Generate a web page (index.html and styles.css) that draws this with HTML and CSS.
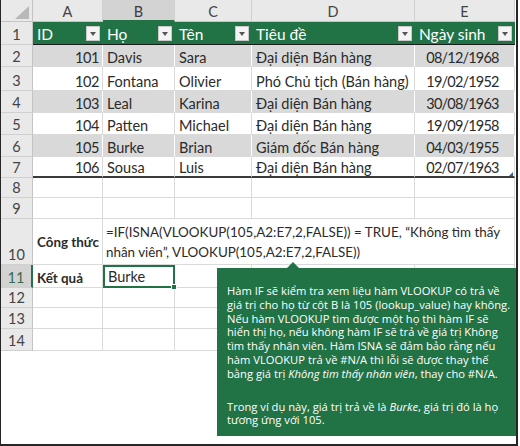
FILE: index.html
```html
<!DOCTYPE html>
<html lang="vi">
<head>
<meta charset="utf-8">
<link rel="stylesheet" href="styles.css">
</head>
<body>
<div class="sheet">
  <div class="grid">
    <div class="corner"><span class="tri"></span></div>
    <div class="ch">A</div><div class="ch sel">B</div><div class="ch">C</div><div class="ch">D</div><div class="ch">E</div>

    <div class="rh">1</div>
    <div class="th">ID<span class="dd"></span></div>
    <div class="th">Họ<span class="dd"></span></div>
    <div class="th">Tên<span class="dd"></span></div>
    <div class="th">Tiêu đề<span class="dd"></span></div>
    <div class="th">Ngày sinh<span class="dd"></span></div>

    <div class="rh">2</div>
    <div class="c band num">101</div><div class="c band">Davis</div><div class="c band">Sara</div><div class="c band">Đại diện Bán hàng</div><div class="c band ctr">08/12/1968</div>
    <div class="rh">3</div>
    <div class="c num">102</div><div class="c">Fontana</div><div class="c">Olivier</div><div class="c">Phó Chủ tịch (Bán hàng)</div><div class="c ctr">19/02/1952</div>
    <div class="rh">4</div>
    <div class="c band num">103</div><div class="c band">Leal</div><div class="c band">Karina</div><div class="c band">Đại diện Bán hàng</div><div class="c band ctr">30/08/1963</div>
    <div class="rh">5</div>
    <div class="c num">104</div><div class="c">Patten</div><div class="c">Michael</div><div class="c">Đại diện Bán hàng</div><div class="c ctr">19/09/1958</div>
    <div class="rh">6</div>
    <div class="c band num">105</div><div class="c band">Burke</div><div class="c band">Brian</div><div class="c band">Giám đốc Bán hàng</div><div class="c band ctr">04/03/1955</div>
    <div class="rh">7</div>
    <div class="c last num">106</div><div class="c last">Sousa</div><div class="c last">Luis</div><div class="c last">Đại diện Bán hàng</div><div class="c last ctr">02/07/1963<span class="resize"></span></div>

    <div class="rh">8</div>
    <div class="c"></div><div class="c"></div><div class="c"></div><div class="c"></div><div class="c"></div>
    <div class="rh">9</div>
    <div class="c"></div><div class="c"></div><div class="c"></div><div class="c"></div><div class="c"></div>
    <div class="rh">10</div>
    <div class="c label mid">Công thức</div>
    <div class="c formula">=IF(ISNA(VLOOKUP(105,A2:E7,2,FALSE)) = TRUE, “Không tìm thấy<br>nhân viên”, VLOOKUP(105,A2:E7,2,FALSE))</div>
    <div class="rh selrow">11</div>
    <div class="c label">Kết quả</div>
    <div class="c active">Burke<span class="handle"></span></div><div class="c"></div><div class="c"></div><div class="c"></div>
    <div class="rh">12</div>
    <div class="c"></div><div class="c"></div><div class="c"></div><div class="c"></div><div class="c"></div>
    <div class="rh">13</div>
    <div class="c"></div><div class="c"></div><div class="c"></div><div class="c"></div><div class="c"></div>
    <div class="rh">14</div>
    <div class="c"></div><div class="c"></div><div class="c"></div><div class="c"></div><div class="c"></div>
  </div>

  <div class="tip">
    <p>Hàm IF sẽ kiểm tra xem liệu hàm VLOOKUP có trả về<br>giá trị cho họ từ cột B là 105 (lookup_value) hay không.<br>Nếu hàm VLOOKUP tìm được một họ thì hàm IF sẽ<br>hiển thị họ, nếu không hàm IF sẽ trả về giá trị Không<br>tìm thấy nhân viên. Hàm ISNA sẽ đảm bảo rằng nếu<br>hàm VLOOKUP trả về #N/A thì lỗi sẽ được thay thế<br>bằng giá trị <i>Không tìm thấy nhân viên</i>, thay cho #N/A.</p>
    <p>Trong ví dụ này, giá trị trả về là <i>Burke</i>, giá trị đó là họ<br>tương ứng với 105.</p>
  </div>
</div>
</body>
</html>
```

FILE: styles.css
```css
html, body {
  margin: 0;
  padding: 0;
  background: #fff;
}

.sheet {
  position: relative;
  width: 518px;
  height: 446px;
  box-sizing: border-box;
  border-left: 1px solid #262626;
  border-right: 2px solid #262626;
  border-bottom: 2px solid #262626;
  overflow: hidden;
  font-family: Lato, "Liberation Sans", sans-serif;
  font-size: 14.5px;
  color: #2b2b2b;
}

.grid {
  display: grid;
  grid-template-columns: 32px 70px 72px 77px 163px 100px;
  grid-template-rows: 22px 23px 22px 24px 22px 22px 22px 21px 20px 21px 46px 23px 20px 21px 22px;
}

.grid > div {
  box-sizing: border-box;
  min-width: 0;
}

.corner {
  position: relative;
  background: #e9e9e9;
  border-right: 1px solid #c4c4c4;
  border-bottom: 1px solid #c4c4c4;
}

.tri {
  position: absolute;
  right: 3px;
  bottom: 2px;
  width: 0;
  height: 0;
  border-left: 14px solid transparent;
  border-bottom: 13px solid #b8b8b8;
}

.ch {
  background: #e9e9e9;
  border-right: 1px solid #d0d0d0;
  border-bottom: 1px solid #c4c4c4;
  color: #444;
  display: flex;
  align-items: center;
  justify-content: center;
  font-size: 14.5px;
  line-height: 17px;
  padding-top: 2px;
}

.ch.sel {
  background: #d3d3d3;
  border-bottom: 2px solid #217346;
  color: #3c3c3c;
}

.rh {
  background: #e9e9e9;
  border-right: 1px solid #c4c4c4;
  border-bottom: 1px solid #d0d0d0;
  color: #444;
  display: flex;
  align-items: flex-end;
  justify-content: center;
  line-height: 17px;
  padding-bottom: 1px;
}

.rh.selrow {
  background: #d3d3d3;
  border-right: 2px solid #217346;
  color: #3a6a4c;
}

.th {
  position: relative;
  background: #217346;
  color: #fff;
  border-bottom: 1px solid #1b1b1b;
  display: flex;
  align-items: center;
  padding: 1px 4px 0 4px;
  font-size: 15.5px;
  line-height: 18px;
  white-space: nowrap;
}

.dd {
  position: absolute;
  right: 3px;
  top: 4px;
  width: 14px;
  height: 15px;
  box-sizing: border-box;
  background: #f4f4f4;
  border: 1px solid #c9c9c9;
}

.dd::after {
  content: "";
  position: absolute;
  left: 3px;
  top: 5px;
  border-left: 3.5px solid transparent;
  border-right: 3.5px solid transparent;
  border-top: 4px solid #555;
}

.c {
  position: relative;
  border-right: 1px solid #dadada;
  border-bottom: 1px solid #dadada;
  display: flex;
  align-items: flex-end;
  padding: 0 3px 0 4px;
  line-height: 17px;
  white-space: nowrap;
}

.c.band {
  background: #d9d9d9;
  border-right: 1px solid #fff;
  border-bottom: 1px solid #d9d9d9;
}

.c.last {
  border-bottom: 2px solid #3a3a3a;
}

.c.num {
  justify-content: flex-end;
  padding-right: 3px;
  letter-spacing: -0.4px;
}

.c.ctr {
  justify-content: center;
  padding-right: 8px;
  letter-spacing: -0.8px;
}

.resize {
  position: absolute;
  right: 1px;
  bottom: 0;
  width: 0;
  height: 0;
  border-left: 4px solid transparent;
  border-bottom: 4px solid #3a5aa8;
}

.c.label {
  font-weight: 700;
  font-size: 13.4px;
  padding-left: 4px;
}

.c.mid {
  align-items: center;
  padding-top: 2px;
}

.c.formula {
  grid-column: 3 / 7;
  white-space: nowrap;
  align-items: flex-end;
  font-size: 13.4px;
  line-height: 20px;
  padding-bottom: 2px;
  padding-left: 3px;
}

.c.active {
  border: 2px solid #217346;
  padding-left: 3px;
  padding-bottom: 1px;
}

.handle {
  position: absolute;
  right: -4px;
  bottom: -4px;
  width: 6px;
  height: 6px;
  background: #217346;
  border: 1px solid #fff;
  box-sizing: border-box;
  z-index: 2;
}

.tip {
  position: absolute;
  left: 216px;
  top: 268px;
  width: 299px;
  height: 168px;
  box-sizing: border-box;
  background: #217346;
  color: #fff;
  padding: 16px 6px 0 10px;
  font-family: "Open Sans", "Noto Sans", sans-serif;
  font-size: 11.2px;
  line-height: 13.8px;
  white-space: nowrap;
  z-index: 3;
}

.tip::before {
  content: "";
  position: absolute;
  left: 70px;
  top: -6px;
  width: 0;
  height: 0;
  border-left: 6px solid transparent;
  border-right: 6px solid transparent;
  border-bottom: 6px solid #217346;
}

.tip p {
  margin: 0 0 19px 0;
}
```
